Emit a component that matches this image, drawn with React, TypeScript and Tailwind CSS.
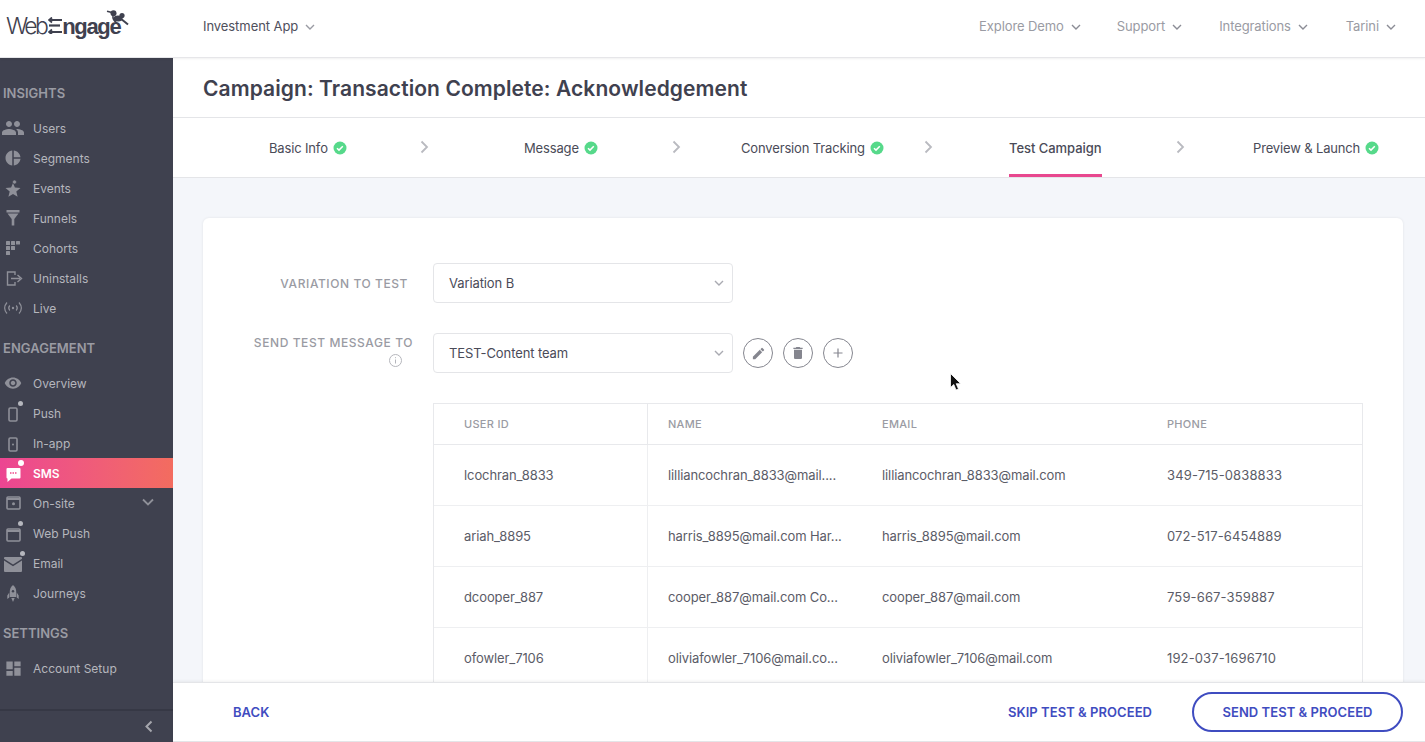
import React from "react";
import { MdPeople, MdPieChart, MdRemoveRedEye, MdDelete, MdEdit, MdDashboard } from "react-icons/md";

const g = "#8f9099";

function Dot({ cls = "bg-[#b5b6bd]" }: { cls?: string }) {
  return <span className={`absolute -top-[2px] right-0 w-[5px] h-[5px] rounded-full ${cls}`} />;
}

function Star() {
  return (
    <svg width="16" height="17" viewBox="0 0 16 17" fill={g}>
      <path d="M8 3l1.900 4.400 5.600.5-4.200 3.600 1.300 5.300L8 14l-4.600 2.800 1.300-5.300L.5 7.900l5.600-.5z" />
      <circle cx="9.500" cy="2" r="2" stroke="#3f414f" strokeWidth="0.600" />
    </svg>
  );
}
function Funnel() {
  return (
    <svg width="14" height="16" viewBox="0 0 14 16" fill={g}>
      <rect x="0.500" y="0" width="13" height="2.500" />
      <path d="M1.500 3.500h11L8.300 9v6.500H5.700V9z" />
    </svg>
  );
}
function Cohorts() {
  return (
    <svg width="15" height="15" viewBox="0 0 15 15" fill={g}>
      <rect x="0" y="0" width="4" height="4" rx="0.500" />
      <rect x="5" y="0" width="4" height="4" rx="0.500" />
      <rect x="10" y="0" width="4" height="3.500" rx="0.500" />
      <rect x="0" y="5" width="4" height="4" rx="0.500" />
      <rect x="5" y="5" width="4" height="4" rx="0.500" />
      <rect x="0" y="10" width="4" height="4" rx="0.500" />
    </svg>
  );
}
function Uninstalls() {
  return (
    <svg width="17" height="15" viewBox="0 0 17 15" fill="none" stroke={g} strokeWidth="1.400" className="ml-[3px]">
      <path d="M9 4V1H1.500v13H9v-3" />
      <path d="M5 7.500h9M11.500 4l4 3.500-4 3.500" />
    </svg>
  );
}
function Live() {
  return (
    <svg width="20" height="14" viewBox="0 0 20 14" fill="none" stroke={g} strokeWidth="1.200">
      <path d="M4 1.500C1 5 1 9 4 12.500M16 1.500c3 3.500 3 7.500 0 11" />
      <path d="M6.800 4.500c-1.400 1.600-1.400 3.400 0 5M13.200 4.500c1.400 1.600 1.400 3.400 0 5" />
      <circle cx="10" cy="7" r="1.200" fill={g} stroke="none" />
    </svg>
  );
}
function Phone({ dot }: { dot?: boolean }) {
  return (
    <span className="relative inline-flex w-[20px] h-[20px] items-center justify-center">
      <svg width="10" height="15" viewBox="0 0 10 15" fill="none" stroke={g} strokeWidth="1.600" className="mt-[2px] -ml-[1px]">
        <rect x="1" y="1" width="8" height="13" rx="1.200" />
        {!dot && <circle cx="5" cy="7.500" r="1" fill={g} stroke="none" />}
      </svg>
      {dot && <Dot />}
    </span>
  );
}
function Sms() {
  return (
    <span className="relative inline-flex w-[20px] h-[20px] items-center justify-center">
      <svg width="15" height="15" viewBox="0 0 15 15" className="mt-[2px]">
        <path d="M1.500 1h12a1 1 0 0 1 1 1v8.500a1 1 0 0 1-1 1H5.500L1.500 15v-3.500a1 1 0 0 1-1-1V2a1 1 0 0 1 1-1z" fill="#fff" />
        <path d="M4 6h7" stroke="#ee4c8c" strokeWidth="1.300" strokeDasharray="1.500 1" />
      </svg>
      <span className="absolute -top-[3px] right-[-1px] w-[6px] h-[6px] rounded-full bg-white" />
    </span>
  );
}
function OnSite() {
  return (
    <svg width="15" height="14" viewBox="0 0 15 14" fill="none" stroke={g} strokeWidth="1.600">
      <rect x="1" y="1" width="13" height="12" rx="1" />
      <path d="M1 3h13" strokeWidth="2" />
      <circle cx="7.500" cy="7.800" r="1.500" fill={g} stroke="none" />
    </svg>
  );
}
function WebPush() {
  return (
    <span className="relative inline-flex w-[20px] h-[20px] items-center justify-center">
      <svg width="15" height="14" viewBox="0 0 15 14" fill="none" stroke={g} strokeWidth="1.600" className="mt-[3px]">
        <rect x="1" y="1" width="13" height="12" rx="1" />
        <path d="M1 3h13" strokeWidth="2" />
      </svg>
      <Dot />
    </span>
  );
}
function Mail() {
  return (
    <span className="relative inline-flex w-[20px] h-[20px] items-center justify-center">
      <svg width="18" height="15" viewBox="0 0 18 15" className="mt-[3px]">
        <path d="M1 0h16a1 1 0 0 1 1 1v.8L9 7.500 0 1.800V1a1 1 0 0 1 1-1z" fill={g} />
        <path d="M0 3.600l9 5.700 9-5.700V14a1 1 0 0 1-1 1H1a1 1 0 0 1-1-1z" fill={g} />
      </svg>
      <span className="absolute -top-[2px] right-[-2px] w-[5px] h-[5px] rounded-full bg-[#b5b6bd]" />
    </span>
  );
}
function Rocket() {
  return (
    <svg width="12" height="17" viewBox="0 0 12 17">
      <path d="M6 0c2.200 1.800 3.200 4.200 3.200 6.500V12H2.800V6.500C2.800 4.200 3.800 1.800 6 0z" fill={g} />
      <path d="M2.300 7.500L.3 10.500V14l2-1.500zM9.700 7.500l2 3V14l-2-1.500zM4.300 13h3.400L6 17z" fill={g} />
      <circle cx="6" cy="6.200" r="1.200" fill="#3f414f" />
    </svg>
  );
}

const insights = [
  { label: "Users", icon: <MdPeople size={24} color={g} /> },
  { label: "Segments", icon: <MdPieChart size={18} color={g} /> },
  { label: "Events", icon: <Star /> },
  { label: "Funnels", icon: <Funnel /> },
  { label: "Cohorts", icon: <Cohorts /> },
  { label: "Uninstalls", icon: <Uninstalls /> },
  { label: "Live", icon: <Live /> },
];
const engagement = [
  { label: "Overview", icon: <MdRemoveRedEye size={18} color={g} /> },
  { label: "Push", icon: <Phone dot /> },
  { label: "In-app", icon: <Phone /> },
  { label: "SMS", icon: <Sms />, active: true },
  { label: "On-site", icon: <OnSite />, caret: true },
  { label: "Web Push", icon: <WebPush /> },
  { label: "Email", icon: <Mail /> },
  { label: "Journeys", icon: <Rocket /> },
];

function NavRow({ item }: { item: { label: string; icon: React.ReactNode; active?: boolean; caret?: boolean } }) {
  return (
    <div
      className={`flex items-center h-[30px] text-[12px] ${
        item.active
          ? "bg-gradient-to-r from-[#ec4592] to-[#f36c5f] text-white font-semibold"
          : "text-[#b5b6bd]"
      }`}
    >
      <span className="w-[33px] pr-[7px] flex items-center justify-center shrink-0">{item.icon}</span>
      <span className="pt-[2px]">{item.label}</span>
      {item.caret && (
        <svg width="12" height="8" viewBox="0 0 12 8" fill="none" stroke={g} strokeWidth="1.800" className="ml-auto mr-[19px] -mt-[2px]">
          <path d="M1 1.500l5 5 5-5" />
        </svg>
      )}
    </div>
  );
}

function SectionLabel({ children, cls }: { children: React.ReactNode; cls: string }) {
  return <div className={`pl-[3px] text-[13px] font-semibold tracking-[0.02px] leading-[16px] text-[#9a9ba3] ${cls}`}>{children}</div>;
}

function Sidebar() {
  return (
    <aside className="w-[173px] shrink-0 bg-[#3f414f] flex flex-col">
      <div className="flex-1 pt-[27px]">
        <SectionLabel cls="mb-[12px]">INSIGHTS</SectionLabel>
        {insights.map((i) => (
          <NavRow key={i.label} item={i} />
        ))}
        <SectionLabel cls="mt-[17px] mb-[12px]">ENGAGEMENT</SectionLabel>
        {engagement.map((i) => (
          <NavRow key={i.label} item={i} />
        ))}
        <SectionLabel cls="mt-[17px] mb-[12px]">SETTINGS</SectionLabel>
        <NavRow item={{ label: "Account Setup", icon: <MdDashboard size={19} color={g} /> }} />
      </div>
      <div className="h-[33px] border-t-2 border-[#363845] flex items-center justify-end pr-[20px]">
        <svg width="9" height="13" viewBox="0 0 9 13" fill="none" stroke="#a5a6ad" strokeWidth="2">
          <path d="M7.500 1.500l-5 5 5 5" />
        </svg>
      </div>
    </aside>
  );
}

function Chevron({ color = "#8b8c95", w = 10 }: { color?: string; w?: number }) {
  return (
    <svg width={w} height="6" viewBox="0 0 10 6" fill="none" stroke={color} strokeWidth="1.400">
      <path d="M1 1l4 4 4-4" />
    </svg>
  );
}

function Logo() {
  return (
    <div className="relative flex items-end w-[130px] h-[40px] text-[#3f414f] leading-none">
      <span className="text-[23px] font-['Inter',sans-serif] font-light tracking-[-2.700px] ml-[6px] mb-[11px]">Web</span>
      <svg width="14" height="17" viewBox="0 0 14 17" fill="none" stroke="#3f414f" strokeWidth="1.800" className="ml-[2px] mb-[15px]">
        <path d="M1 3h13M4 .5L1 3l3 2.500" />
        <path d="M1 8.500h11" strokeWidth="2.200" />
        <path d="M1 15h13M4 12.500L1 15l3 2.500" />
      </svg>
      <span className="text-[22px] font-['Liberation_Sans',sans-serif] font-bold tracking-[-1.300px] mb-[11px]">ngage</span>
      <svg width="24" height="20" viewBox="0 0 24 20" className="absolute left-[106px] top-[1px]">
        <path d="M1 1.200l5 1.300" stroke="#3f414f" strokeWidth="1.400" />
        <circle cx="7.500" cy="3.200" r="3" fill="#3f414f" />
        <ellipse cx="12" cy="8.500" rx="4.500" ry="3" fill="#3f414f" />
        <circle cx="16" cy="5.500" r="2.600" fill="#3f414f" />
        <path d="M14 8l8 6.500" stroke="#3f414f" strokeWidth="2" />
        <path d="M7 5c-.5 3 1 6 4 8" fill="none" stroke="#3f414f" strokeWidth="1.500" />
      </svg>
    </div>
  );
}

function Header() {
  const right = [
    { t: "Explore Demo", cls: "mr-[36px]" },
    { t: "Support", cls: "mr-[37px]" },
    { t: "Integrations", cls: "mr-[38px]" },
    { t: "Tarini", cls: "" },
  ];
  return (
    <header className="relative z-20 h-[58px] shrink-0 bg-white border-b border-[#e6e6e9] shadow-[0_1px_2px_rgba(0,0,0,0.06)] flex items-center pr-[29px]">
      <div className="w-[203px] shrink-0">
        <Logo />
      </div>
      <div className="flex items-center gap-[7px] text-[13px] text-[#4f505c] tracking-[-0.07px] mb-[4px]">
        Investment App
        <Chevron color="#9a9ba3" />
      </div>
      <div className="ml-auto flex items-center text-[13px] text-[#9a9ba3] tracking-[-0.1px] mb-[4px]">
        {right.map((r) => (
          <div key={r.t} className={`flex items-center gap-[7px] ${r.cls}`}>
            {r.t}
            <Chevron />
          </div>
        ))}
      </div>
    </header>
  );
}

function Check() {
  return (
    <svg width="14" height="14" viewBox="0 0 14 14" className="shrink-0">
      <circle cx="7" cy="7" r="6.500" fill="#56d98a" />
      <path d="M4 7.200l2 1.900 3.800-3.800" fill="none" stroke="#fff" strokeWidth="1.500" />
    </svg>
  );
}

function Arrow() {
  return (
    <svg width="9" height="14" viewBox="0 0 9 14" fill="none" stroke="#b9bac0" strokeWidth="1.800" className="shrink-0">
      <path d="M1.500 1.500l5.500 5.500-5.500 5.500" />
    </svg>
  );
}

const steps = [
  { t: "Basic Info", pl: "pl-[96px]", check: true },
  { t: "Message", pl: "pl-[99px]", check: true },
  { t: "Conversion Tracking", pl: "pl-[64px]", check: true },
  { t: "Test Campaign", pl: "pl-[80px]", active: true },
  { t: "Preview & Launch", pl: "pl-[72px]", check: true },
];

function Steps() {
  return (
    <div className="h-[60px] shrink-0 bg-white border-b border-[#e4e5e8] flex">
      {steps.map((s, i) => (
        <div key={s.t} className={`w-[252px] ${s.pl} relative flex items-center shrink-0`}>
          <div className="relative h-full flex items-center gap-[5px] text-[13px] text-[#4a4b58] tracking-[-0.15px]">
            <span className={s.active ? "font-medium tracking-[-0.05px] pt-[2px]" : "pt-[2px]"}>{s.t}</span>
            {s.check && <Check />}
            {s.active && <span className="absolute left-0 right-0 bottom-0 h-[3px] bg-[#e8488f]" />}
          </div>
          {i < 4 && (
            <span className="absolute right-[-4px] top-[22px]">
              <Arrow />
            </span>
          )}
        </div>
      ))}
    </div>
  );
}

function SelectBox({ value }: { value: string }) {
  return (
    <div className="w-[300px] h-[40px] bg-white border border-[#e4e5e8] rounded-[4px] flex items-center pl-[15px] pr-[8px] text-[13px] text-[#4a4b58] tracking-[-0.1px]">
      <span className="pt-[2px]">{value}</span>
      <span className="ml-auto">
        <Chevron color="#a9aab1" />
      </span>
    </div>
  );
}

function RoundBtn({ children }: { children: React.ReactNode }) {
  return (
    <span className="w-[30px] h-[30px] rounded-full border border-[#85868f] flex items-center justify-center text-[#85868f]">
      {children}
    </span>
  );
}

const rows = [
  ["lcochran_8833", "lilliancochran_8833@mail....", "lilliancochran_8833@mail.com", "349-715-0838833"],
  ["ariah_8895", "harris_8895@mail.com Har...", "harris_8895@mail.com", "072-517-6454889"],
  ["dcooper_887", "cooper_887@mail.com Co...", "cooper_887@mail.com", "759-667-359887"],
  ["ofowler_7106", "oliviafowler_7106@mail.co...", "oliviafowler_7106@mail.com", "192-037-1696710"],
];

function UserTable() {
  const cols = "grid grid-cols-[214px_214px_285px_1fr]";
  return (
    <div className="ml-[230px] w-[930px] border border-[#e8e9ec]">
      <div className={`${cols} h-[41px] items-stretch border-b border-[#e8e9ec] text-[11px] tracking-[0.3px] text-[#9a9ba3] font-medium`}>
        <div className="flex items-center pl-[30px] border-r border-[#e8e9ec]">USER ID</div>
        <div className="flex items-center pl-[20px]">NAME</div>
        <div className="flex items-center pl-[20px]">EMAIL</div>
        <div className="flex items-center pl-[20px]">PHONE</div>
      </div>
      {rows.map((r) => (
        <div key={r[0]} className={`${cols} h-[61px] border-b border-[#eeeff1] text-[13px] text-[#5b5c67] tracking-[-0.1px]`}>
          <div className="flex items-center pl-[30px] pt-[2px] border-r border-[#eeeff1]">{r[0]}</div>
          <div className="flex items-center pl-[20px] pt-[2px]">{r[1]}</div>
          <div className="flex items-center pl-[20px] pt-[2px]">{r[2]}</div>
          <div className="flex items-center pl-[20px] pt-[2px] tracking-[0.13px]">{r[3]}</div>
        </div>
      ))}
    </div>
  );
}

function Card() {
  return (
    <div className="ml-[30px] mr-[22px] mt-[40px] bg-white rounded-[6px] shadow-[0_0_3px_rgba(0,0,0,0.08)] pt-[45px] pb-[40px]">
      <div className="flex items-start">
        <div className="w-[205px] text-right text-[12px] tracking-[0.58px] font-medium text-[#9a9ba3] pt-[13px] leading-[16px]">
          VARIATION TO TEST
        </div>
        <div className="ml-[25px]">
          <SelectBox value="Variation B" />
        </div>
      </div>
      <div className="flex items-start mt-[30px] mb-[30px]">
        <div className="w-[210px] text-right text-[12px] tracking-[0.58px] font-medium text-[#9a9ba3] pt-[2px] leading-[16px]">
          SEND TEST MESSAGE TO
          <div className="flex justify-end pr-[11px] mt-[3px]">
            <svg width="13" height="13" viewBox="0 0 13 13" fill="none" stroke="#b5b6bc" strokeWidth="1">
              <circle cx="6.500" cy="6.500" r="6" />
              <path d="M6.500 5.500v4M6.500 3.200v1" />
            </svg>
          </div>
        </div>
        <div className="ml-[20px]">
          <SelectBox value="TEST-Content team" />
        </div>
        <div className="flex items-center gap-[10px] ml-[10px] h-[40px]">
          <RoundBtn>
            <MdEdit size={15} />
          </RoundBtn>
          <RoundBtn>
            <MdDelete size={16} />
          </RoundBtn>
          <RoundBtn>
            <svg width="10" height="10" viewBox="0 0 10 10" stroke="currentColor" strokeWidth="1.200">
              <path d="M5 0.500v9M0.500 5h9" />
            </svg>
          </RoundBtn>
        </div>
      </div>
      <UserTable />
    </div>
  );
}

function Footer() {
  return (
    <footer className="relative z-10 h-[60px] shrink-0 bg-white border-t border-b border-[#e4e5e8] shadow-[0_-1px_3px_rgba(0,0,0,0.06)] flex items-center pl-[60px] pr-[22px] text-[13px] font-semibold tracking-[0.05px] text-[#3f4cc0]">
      <span className="pt-[2px]">BACK</span>
      <span className="ml-auto mr-[40px] pt-[2px]">SKIP TEST &amp; PROCEED</span>
      <span className="w-[211px] h-[40px] rounded-full border-2 border-[#3f4cc0] flex items-center justify-center pt-[2px]">
        SEND TEST &amp; PROCEED
      </span>
    </footer>
  );
}

export default function App() {
  return (
    <div className="relative w-[1425px] h-[742px] overflow-hidden flex flex-col bg-white font-['Inter',sans-serif]">
      <Header />
      <div className="flex flex-1 min-h-0">
        <Sidebar />
        <main className="flex-1 min-w-0 flex flex-col">
          <div className="h-[60px] shrink-0 bg-white border-b border-[#e4e5e8] flex items-center pl-[30px]">
            <h1 className="text-[21px] font-semibold text-[#3f414f] tracking-[0.08px] pt-[2px]">
              Campaign: Transaction Complete: Acknowledgement
            </h1>
          </div>
          <Steps />
          <div className="flex-1 min-h-0 overflow-hidden bg-[#f4f6fa]">
            <Card />
          </div>
          <Footer />
        </main>
      </div>
      {/* mouse pointer caught in the shot */}
      <svg width="12" height="18" viewBox="0 0 12 18" className="absolute left-[950px] top-[373px] z-30">
        <path d="M0.500 0.500v14l3.300-3 2.200 5.500 2.500-1-2.300-5.300h4.500z" fill="#111" stroke="#fff" strokeWidth="0.800" />
      </svg>
    </div>
  );
}
